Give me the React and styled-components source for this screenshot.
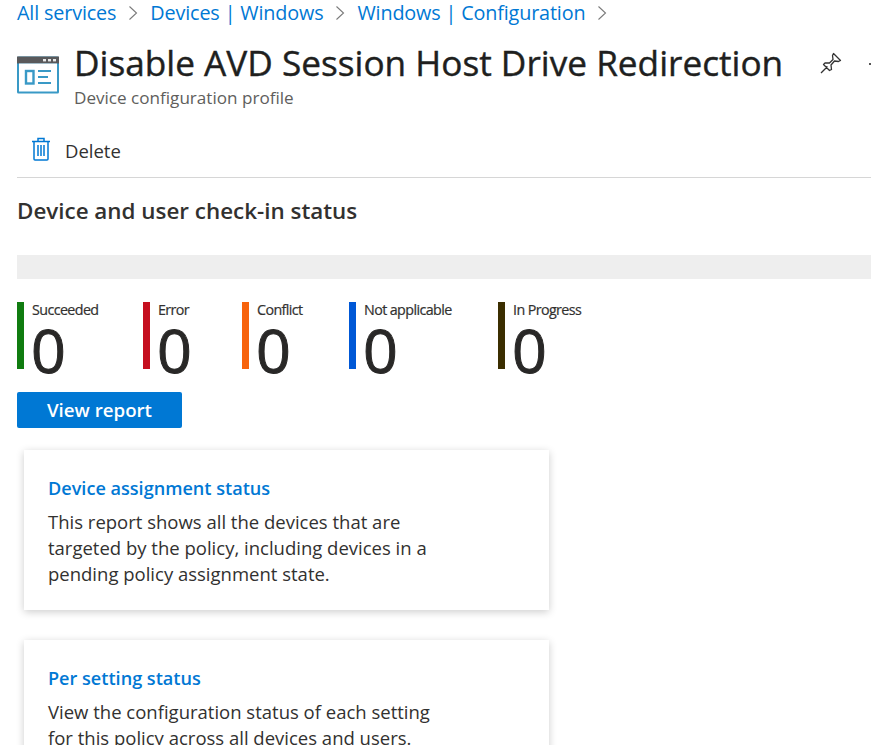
import React from 'react';
import styled, { createGlobalStyle } from 'styled-components';

const stats = [
  { label: 'Succeeded', color: '#107c10', width: 126 },
  { label: 'Error', color: '#c50f1f', width: 99 },
  { label: 'Conflict', color: '#f7630c', width: 107 },
  { label: 'Not applicable', color: '#0058d6', width: 149 },
  { label: 'In Progress', color: '#3b2e00', width: 100 },
];

const crumbs = ['All services', 'Devices | Windows', 'Windows | Configuration'];

function Chevron() {
  return (
    <ChevronIcon viewBox="0 0 10 16">
      <path d="M1.5 1.5 8.5 8l-7 6.5" fill="none" stroke="#7a7a7a" strokeWidth="1.1" />
    </ChevronIcon>
  );
}

export default function App() {
  return (
    <>
      <GlobalStyle />
      <Page>
        <Breadcrumb>
          {crumbs.map((crumb) => (
            <React.Fragment key={crumb}>
              <Crumb>{crumb}</Crumb>
              <Chevron />
            </React.Fragment>
          ))}
        </Breadcrumb>

        <Header>
          <ProfileIcon viewBox="0 0 42 38">
            <rect x="0" y="0.5" width="42" height="37" rx="1.5" fill="#3999c6" />
            <rect x="0" y="0.5" width="42" height="7" fill="#59595b" />
            <rect x="2" y="7.5" width="38" height="28" fill="#fff" />
            <rect x="26" y="3" width="3" height="2.4" fill="#e8e8e8" />
            <rect x="31" y="3" width="3" height="2.4" fill="#e8e8e8" />
            <rect x="36" y="3" width="3" height="2.4" fill="#e8e8e8" />
            <rect x="9" y="15" width="7.5" height="12.5" fill="none" stroke="#3999c6" strokeWidth="2.4" />
            <path d="M21 15h13M21 21h10M21 27h13" stroke="#3999c6" strokeWidth="2.2" />
          </ProfileIcon>
          <HeaderText>
            <Title>Disable AVD Session Host Drive Redirection</Title>
            <Subtitle>Device configuration profile</Subtitle>
          </HeaderText>
          <PinIcon viewBox="0 0 22 22">
            <path
              d="M1 21 7.5 14.5M13.5 1.5 20.5 8.5 18.5 9.5 14.5 9 11 13 11.5 17.5 9.5 18.5 3.5 12.5 5 11 9.5 11 13 7.5 12.5 3.5Z"
              fill="none"
              stroke="#333"
              strokeWidth="1.3"
              strokeLinejoin="round"
            />
          </PinIcon>
          <EdgeDot />
        </Header>

        <Toolbar>
          <TrashIcon viewBox="0 0 20 24">
            <path
              d="M1 4.5h18M3 4.5V22a1 1 0 0 0 1 1h12a1 1 0 0 0 1-1V4.5M7 4.5V1.5h6v3M7 8v11M10 8v11M13 8v11"
              fill="none"
              stroke="#0078d4"
              strokeWidth="1.5"
            />
          </TrashIcon>
          <ToolbarLabel>Delete</ToolbarLabel>
        </Toolbar>

        <SectionTitle>Device and user check-in status</SectionTitle>
        <ProgressTrack />

        <StatRow>
          {stats.map((stat) => (
            <Stat key={stat.label} $width={stat.width}>
              <StatBar $color={stat.color} />
              <StatText>
                <StatLabel>{stat.label}</StatLabel>
                <StatValue>0</StatValue>
              </StatText>
            </Stat>
          ))}
        </StatRow>

        <PrimaryButton>View report</PrimaryButton>

        <CardList>
          <Card>
            <CardTitle>Device assignment status</CardTitle>
            <CardBody>
              This report shows all the devices that are targeted by the policy, including devices in a
              pending policy assignment state.
            </CardBody>
          </Card>
          <Card>
            <CardTitle>Per setting status</CardTitle>
            <CardBody>View the configuration status of each setting for this policy across all devices and users.</CardBody>
          </Card>
        </CardList>
      </Page>
    </>
  );
}

const GlobalStyle = createGlobalStyle`
  html, body {
    margin: 0;
    height: 100%;
    overflow: hidden;
    background: #fff;
  }

  body {
    font-family: "Open Sans", "Noto Sans", sans-serif;
    color: #252423;
  }
`;

const Page = styled.div`
  width: 871px;
  height: 745px;
  overflow: hidden;
  padding-left: 17px;
  box-sizing: border-box;
`;

const Breadcrumb = styled.nav`
  display: flex;
  align-items: center;
  height: 26px;
  gap: 12px;
`;

const Crumb = styled.span`
  font-size: 19.8px;
  letter-spacing: -0.15px;
  line-height: 26px;
  color: #0078d4;
`;

const ChevronIcon = styled.svg`
  width: 10px;
  height: 16px;
`;

const Header = styled.header`
  position: relative;
  display: flex;
  align-items: flex-start;
  padding-top: 15px;
  height: 71px;
  box-sizing: content-box;
  margin-bottom: -1px;
`;

const ProfileIcon = styled.svg`
  width: 42px;
  height: 38px;
  margin-top: 15px;
  margin-right: 15px;
  flex: none;
`;

const HeaderText = styled.div`
  width: 746px;
  flex: none;
`;

const Title = styled.h1`
  margin: 0;
  font-size: 35.2px;
  font-weight: 400;
  line-height: 42px;
  white-space: nowrap;
  color: #201f1e;
  -webkit-text-stroke: 0.4px #201f1e;
`;

const Subtitle = styled.div`
  font-size: 17.1px;
  line-height: 20px;
  margin-top: 5px;
  color: #605e5c;
`;

const PinIcon = styled.svg`
  width: 22px;
  height: 22px;
  margin-top: 11px;
  flex: none;
`;

const EdgeDot = styled.span`
  position: absolute;
  right: 0;
  top: 37px;
  width: 2px;
  height: 2px;
  background: #555;
`;

const Toolbar = styled.div`
  display: flex;
  align-items: center;
  gap: 14px;
  height: 67px;
  padding-left: 14px;
  padding-top: 13px;
  box-sizing: border-box;
  border-bottom: 1px solid #d6d6d6;
`;

const TrashIcon = styled.svg`
  width: 20px;
  height: 24px;
  margin-bottom: 3px;
`;

const ToolbarLabel = styled.span`
  font-size: 18.5px;
  color: #323130;
`;

const SectionTitle = styled.h2`
  margin: 19px 0 0;
  font-size: 22.4px;
  font-weight: 600;
  line-height: 28px;
  color: #323130;
`;

const ProgressTrack = styled.div`
  height: 24px;
  margin-top: 30px;
  background: #eeeeee;
`;

const StatRow = styled.div`
  display: flex;
  margin-top: 23px;
`;

const Stat = styled.div`
  display: flex;
  width: ${(props) => props.$width}px;
  height: 67px;
  flex: none;
`;

const StatBar = styled.span`
  width: 7px;
  height: 67px;
  flex: none;
  background: ${(props) => props.$color};
`;

const StatText = styled.div`
  margin-left: 8px;
`;

const StatLabel = styled.div`
  font-size: 14.3px;
  letter-spacing: -0.6px;
  line-height: 16px;
  color: #323130;
  -webkit-text-stroke: 0.2px #323130;
`;

const StatValue = styled.div`
  font-size: 61px;
  font-weight: 500;
  line-height: 62px;
  margin-top: 1px;
  margin-left: -1px;
  color: #292827;
  -webkit-text-stroke: 1px #292827;
`;

const PrimaryButton = styled.button`
  display: block;
  width: 165px;
  height: 36px;
  margin-top: 23px;
  padding: 0 0 2px;
  border: 0;
  border-radius: 2px;
  background: #0078d4;
  color: #fff;
  font-family: inherit;
  font-size: 18.7px;
  font-weight: 600;
`;

const CardList = styled.div`
  display: flex;
  flex-direction: column;
  gap: 30px;
  margin: 22px 0 0 7px;
  width: 525px;
`;

const Card = styled.section`
  min-height: 160px;
  padding: 26px 24px 0;
  box-sizing: border-box;
  background: #fff;
  box-shadow: 0 2px 8px rgba(0, 0, 0, 0.2);
`;

const CardTitle = styled.h3`
  margin: 0;
  font-size: 18.1px;
  font-weight: 600;
  line-height: 24px;
  color: #0078d4;
`;

const CardBody = styled.p`
  margin: 9px 0 0;
  width: 400px;
  font-size: 18.5px;
  line-height: 26px;
  color: #323130;
`;
